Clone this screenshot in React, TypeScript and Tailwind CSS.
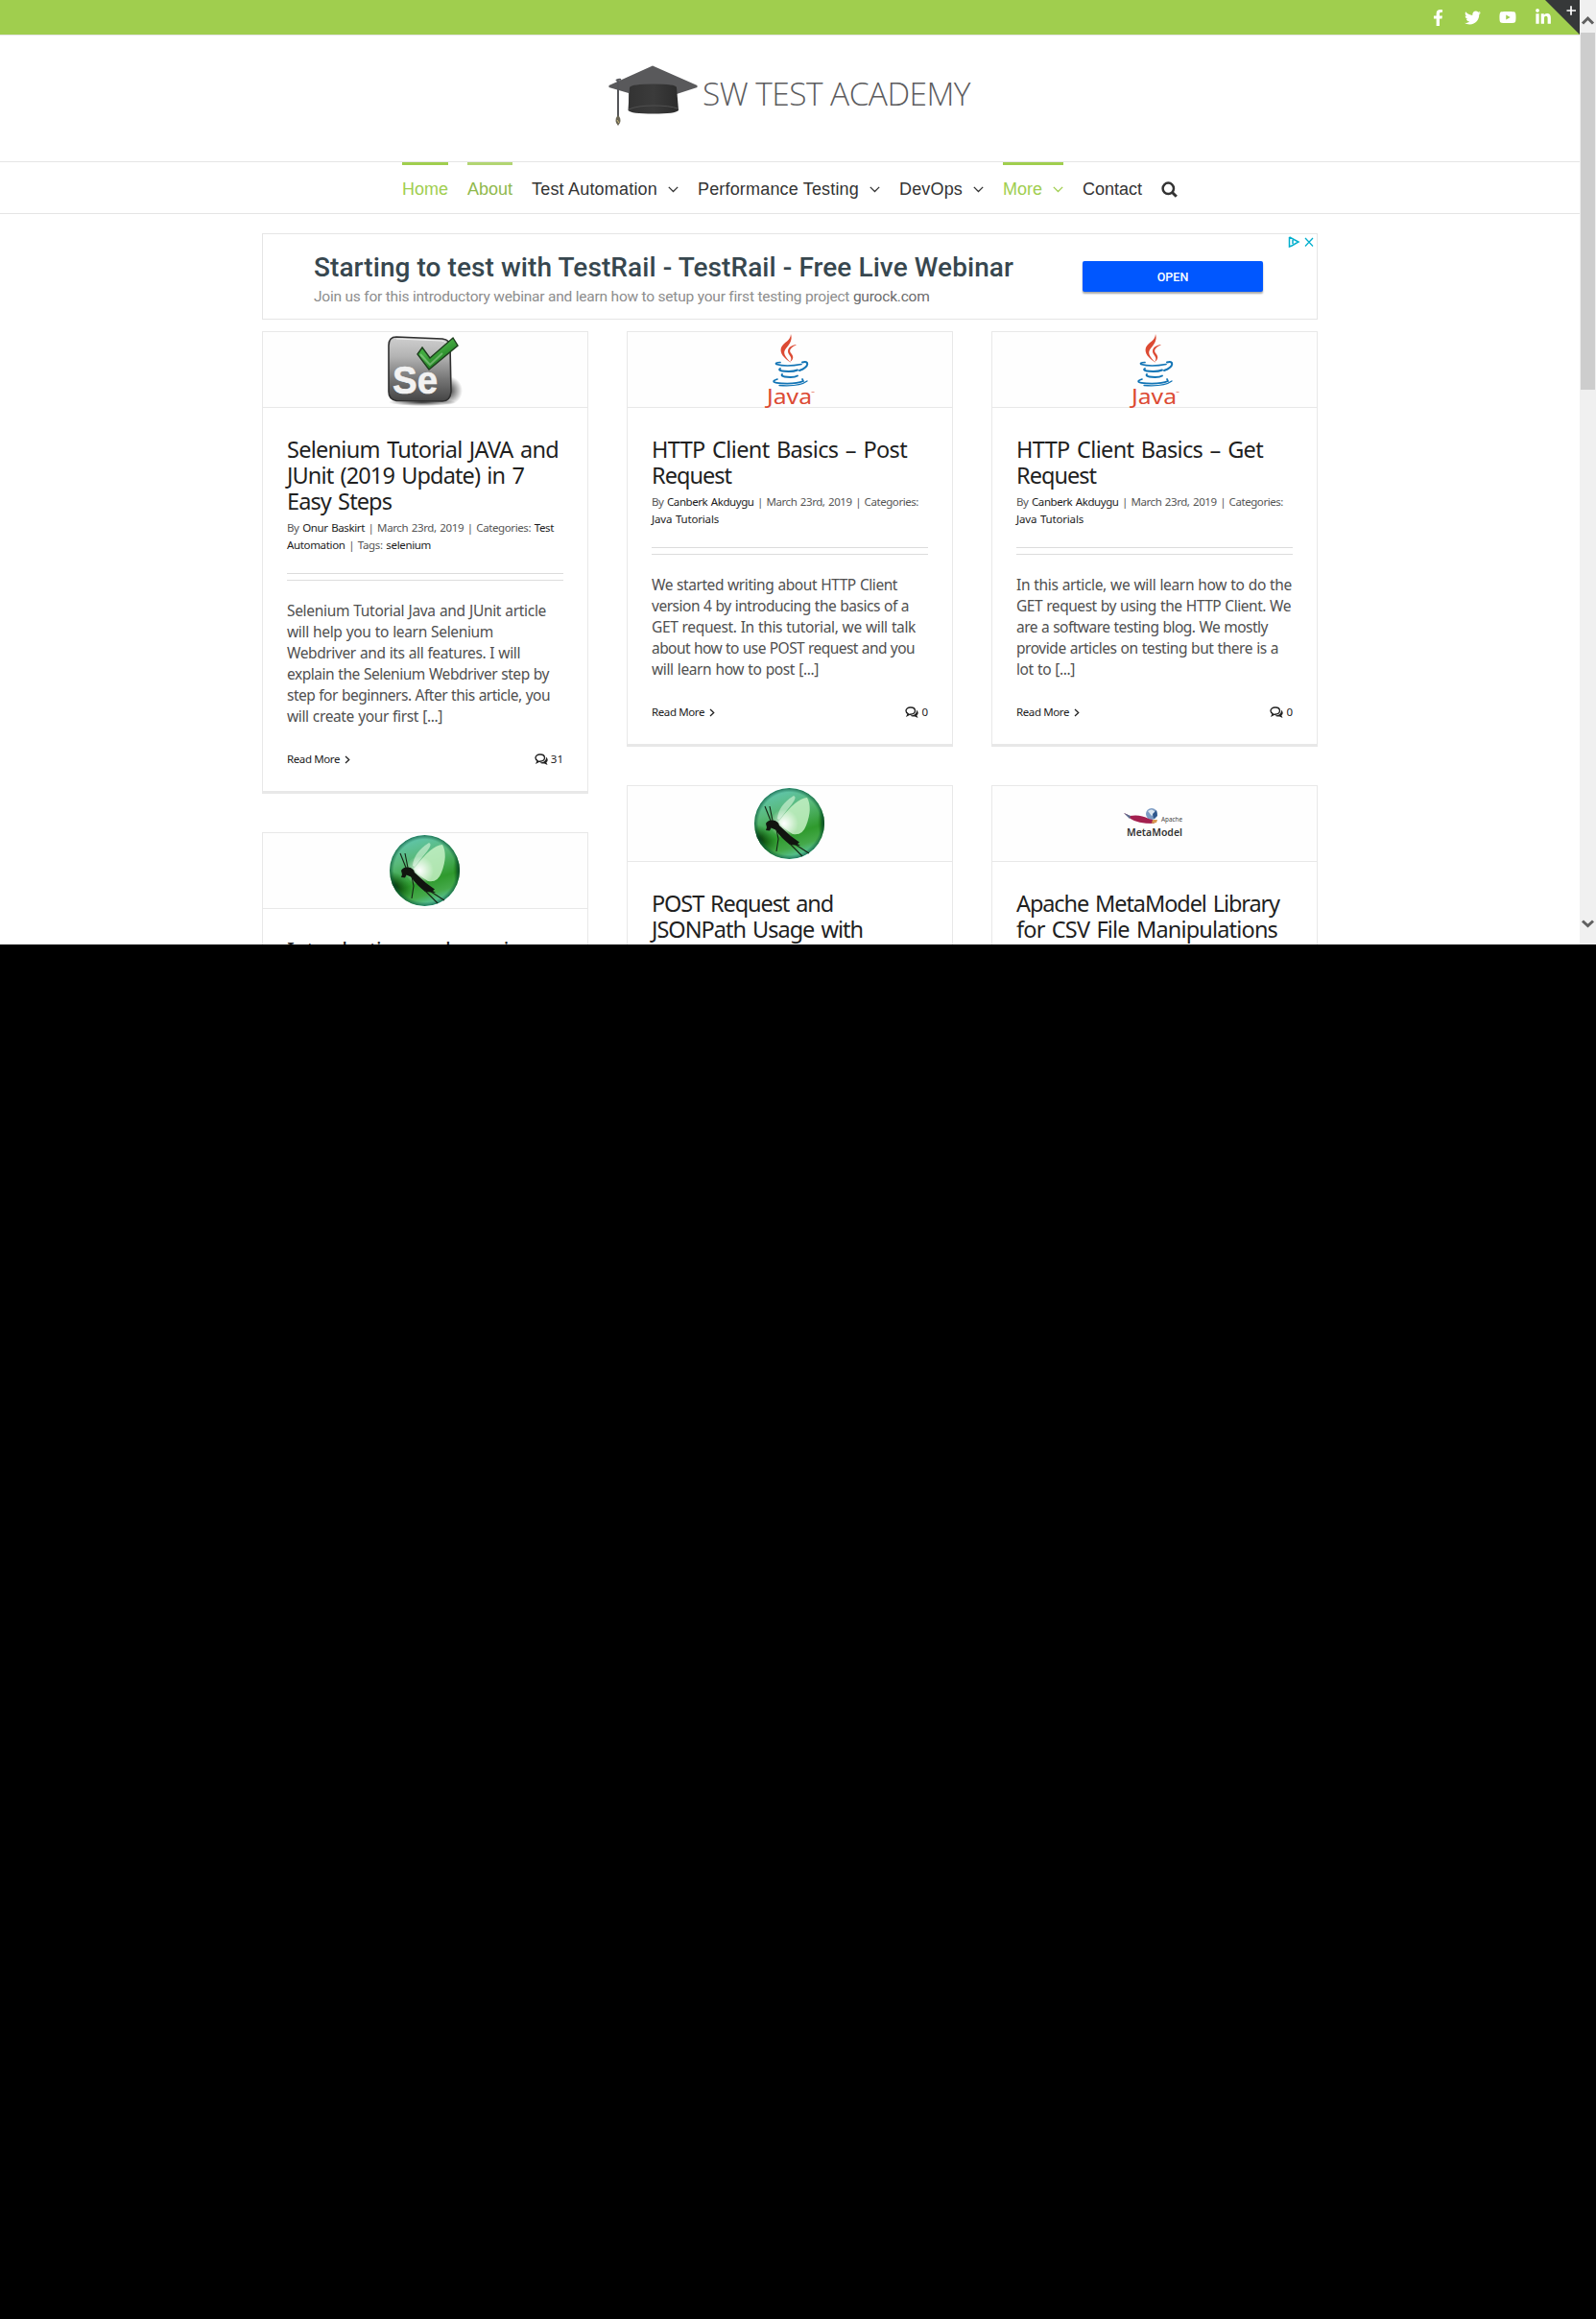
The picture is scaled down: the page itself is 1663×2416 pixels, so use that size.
import { useLayoutEffect, useRef, type ReactNode } from "react";
import { FaFacebookF, FaTwitter, FaYoutube, FaLinkedinIn } from "react-icons/fa";

/* Single line of text whose tracking is adjusted so that it spans `w` pixels. */
function Line({ w, children, className = "" }: { w: number; children: ReactNode; className?: string }) {
  const ref = useRef<HTMLSpanElement>(null);
  useLayoutEffect(() => {
    const el = ref.current;
    if (!el) return;
    el.style.letterSpacing = "0px";
    const count = (el.textContent || "").length;
    const natural = el.getBoundingClientRect().width;
    el.style.letterSpacing = `${(w - natural) / count}px`;
  }, [w]);
  return (
    <span className={`block ${className}`}>
      <span ref={ref} className="inline-block whitespace-pre align-top">
        {children}
      </span>
    </span>
  );
}

function CapLogo() {
  return (
    <svg width="94" height="66" viewBox="0 0 94 66" className="shrink-0">
      <defs>
        <linearGradient id="capBase" x1="0" x2="1">
          <stop offset="0" stopColor="#333" />
          <stop offset="0.5" stopColor="#3b3b3b" />
          <stop offset="1" stopColor="#2c2c2c" />
        </linearGradient>
      </defs>
      <path d="M46 1.5 L92.500 22 V24 L71 31 V40 H21 V30 L0.500 24 V22 Z" fill="#59595b" />
      <path d="M22 24 Q24 20.500 47 20.500 Q70 20.500 71 24 L73 48 Q70 51.500 47 51.500 Q23 51.500 20.500 48 Z" fill="url(#capBase)" />
      <path d="M21 47 Q30 43 47 43 Q64 43 72 46" stroke="#505050" fill="none" />
      <path d="M8 17 Q10 15 13 16 M10 17 V55" stroke="#55565a" strokeWidth="2" fill="none" />
      <path d="M10 53 Q6.500 56 8 61 L10 64 L12 61 Q13.500 56 10 53Z" fill="#6b6655" />
      <path d="M9 58 L11 61" stroke="#c9b97a" />
    </svg>
  );
}

function NavChevron() {
  return (
    <svg width="11" height="7" viewBox="0 0 11 7" fill="none" stroke="currentColor" strokeWidth="1.300" className="mt-[1px] ml-[11px]">
      <path d="M0.800 0.900 L5.500 5.500 L10.200 0.900" />
    </svg>
  );
}

function NavItem({ label, w, bar = "border-transparent", color = "text-[#333]", chevron = false }: { label: string; w: number; bar?: string; color?: string; chevron?: boolean }) {
  return (
    <a className={`flex h-[53px] items-center border-t-[3px] ${bar} ${color}`}>
      <Line w={w}>{label}</Line>
      {chevron && <NavChevron />}
    </a>
  );
}

function SeleniumLogo() {
  return (
    <svg width="80" height="74" viewBox="0 0 80 74" className="mr-[3px] overflow-visible">
      <defs>
        <linearGradient id="seBox" x1="0" y1="0" x2="0" y2="1">
          <stop offset="0" stopColor="#cfcfcf" />
          <stop offset="0.300" stopColor="#b4b4b4" />
          <stop offset="0.650" stopColor="#777" />
          <stop offset="1" stopColor="#444" />
        </linearGradient>
        <linearGradient id="seTick" x1="0" y1="0" x2="0.700" y2="1">
          <stop offset="0" stopColor="#2bb02e" />
          <stop offset="0.450" stopColor="#45aa42" />
          <stop offset="1" stopColor="#0c6a12" />
        </linearGradient>
        <radialGradient id="seShade">
          <stop offset="0" stopColor="#000" stopOpacity="0.800" />
          <stop offset="1" stopColor="#000" stopOpacity="0" />
        </radialGradient>
      </defs>
      <ellipse cx="65" cy="59" rx="15" ry="15" fill="url(#seShade)" />
      <ellipse cx="38" cy="71" rx="35" ry="4" fill="url(#seShade)" />
      <path d="M11 3 L59 5 Q67 6 67 13 L68 60 Q67 70 59 70 L11 69.500 Q3 68 3 60 V12 Q3 3 11 3Z" fill="url(#seBox)" stroke="#303030" strokeWidth="1.600" />
      <path d="M11 5 L58 7 Q64 8 65 14" fill="none" stroke="#eee" strokeWidth="1" />
      <text x="7" y="62" fontFamily="Liberation Sans" fontWeight="700" fontSize="41" textLength="47" lengthAdjust="spacingAndGlyphs" fill="#f2f2f2" stroke="#f2f2f2" strokeWidth="0.600">Se</text>
      <path d="M33 21 L38 14 L46 25 L70 4 L75 12 L45 37 Z" fill="url(#seTick)" stroke="#1d3d1d" strokeWidth="1.400" />
      <path d="M36 21 L46 32 L59 20" stroke="#a5d8a0" strokeOpacity="0.500" strokeWidth="2" fill="none" />
    </svg>
  );
}

function JavaLogo() {
  return (
    <svg width="54" height="76" viewBox="0 0 54 76" className="mb-[2px] ml-[5px] overflow-visible">
      <g fill="#dc4a33">
        <path d="M25 2 C27 8 24 12 20 17 C16 22 19 25 25 32 C18 27 13 22 15 16 C18 10 25 9 25 2Z" />
        <path d="M31 13 C25 16 22 19 26 23 C29 27 26 30 24 31 C28 26 22 24 22 20 C22 15 28 13 31 13Z" />
      </g>
      <g fill="none" stroke="#1274b5" strokeLinecap="round">
        <path d="M14 31.500 Q8 32 10 33.500 Q20 36.500 36 33.500" strokeWidth="1.700" />
        <path d="M37 31.500 C44 29 45 36 34 40" strokeWidth="2" />
        <path d="M14 38 C9 41 26 42 32 39.500" strokeWidth="1.900" />
        <path d="M16 44 C13 47 28 48 32 45.500" strokeWidth="1.900" />
        <path d="M11 49 C-4 54 29 55 38 51 L37 49" strokeWidth="1.700" />
        <path d="M13 55.500 Q34 57 42 51" strokeWidth="1.300" />
      </g>
      <text x="0" y="75" fontFamily="Noto Sans" fontSize="22.500" textLength="47" lengthAdjust="spacingAndGlyphs" fill="#dc4a33">Java</text>
      <path d="M46.500 62.500 H49.500" stroke="#dc4a33" strokeOpacity="0.600" />
    </svg>
  );
}

function LocustLogo() {
  return (
    <svg width="74" height="76" viewBox="0 0 74 76">
      <defs>
        <linearGradient id="orb" x1="0.200" y1="0" x2="0.500" y2="1">
          <stop offset="0" stopColor="#62c9bb" />
          <stop offset="0.350" stopColor="#59b97a" />
          <stop offset="0.680" stopColor="#2f9a2d" />
          <stop offset="0.850" stopColor="#45a94a" />
          <stop offset="1" stopColor="#5cc9a9" />
        </linearGradient>
        <radialGradient id="orbEdge">
          <stop offset="0.880" stopColor="#0b5a3c" stopOpacity="0" />
          <stop offset="1" stopColor="#0b5a3c" stopOpacity="0.750" />
        </radialGradient>
        <radialGradient id="orbDark">
          <stop offset="0" stopColor="#022804" />
          <stop offset="1" stopColor="#065c08" stopOpacity="0" />
        </radialGradient>
        <radialGradient id="orbGlow">
          <stop offset="0" stopColor="#fff" />
          <stop offset="1" stopColor="#fff" stopOpacity="0" />
        </radialGradient>
        <clipPath id="orbClip"><ellipse cx="36.500" cy="38" rx="36.500" ry="37" /></clipPath>
      </defs>
      <g clipPath="url(#orbClip)">
        <rect width="74" height="76" fill="url(#orb)" />
        <ellipse cx="4" cy="54" rx="22" ry="14" fill="url(#orbDark)" transform="rotate(30 4 54)" />
        <ellipse cx="74" cy="36" rx="8" ry="22" fill="url(#orbDark)" />
        <path d="M24 33 Q25 19 41 9 Q45 10 39 18 L26 34Z" fill="#c9f0cf" fillOpacity="0.700" />
        <path d="M27 34 Q43 12 55 11 Q61 22 54 40 Q50 51 40 49 Q30 43 25 36Z" fill="#c6f1c4" fillOpacity="0.850" />
        <circle cx="31" cy="38" r="15" fill="url(#orbGlow)" />
        <ellipse cx="36.500" cy="38" rx="36.500" ry="37" fill="url(#orbEdge)" />
      </g>
      <path d="M12 38 Q14 34 19 34.500 Q25 35 26 40 L38 51 L47 57.500 L45 59 L48 61 L37 60 Q28 53 22 44.500 L17.500 42.500 L16 45.500 L12 45 L13 42Z" fill="#11150f" />
      <path d="M17 35 L11 20 M19 35 L16 20 M23 44 L25 54 L23 67 M37 59 L50 72 M43 60 L57 69" stroke="#142414" strokeWidth="1.100" fill="none" />
    </svg>
  );
}

function MetaModelLogo() {
  return (
    <svg width="66" height="34" viewBox="0 0 66 34" className="mr-[1px] mb-[2px] overflow-visible">
      <circle cx="30" cy="8" r="6" fill="#7d9cc4" />
      <path d="M26 5 Q31 1 34 7 L30 10Z" fill="#dbe6f0" />
      <path d="M31 8 L35 4 L36 10 L32 13Z" fill="#2e568c" />
      <path d="M1 7 Q4 8 7 10 Q18 8 27 13 L35 15 L32 18 Q15 18 8 13Z" fill="#a3204f" />
      <path d="M1 7 L8 10 L7 13Z" fill="#5c6c8e" />
      <path d="M31 14 L36 14 L35 17 L30 18Z" fill="#d99a52" />
      <text x="40" y="16" fontFamily="Noto Sans" fontSize="7.500" textLength="22" lengthAdjust="spacingAndGlyphs" fill="#444">Apache</text>
      <text x="4" y="31" fontFamily="Noto Sans" fontWeight="600" fontSize="11.500" textLength="58" lengthAdjust="spacingAndGlyphs" fill="#333">MetaModel</text>
    </svg>
  );
}

function CommentsIcon() {
  return (
    <svg width="14" height="13" viewBox="0 0 14 13" className="mr-[3px]">
      <path d="M5.800 1 C3 1 1 2.600 1 4.600 C1 6 2 7 3.200 7.600 L2.400 9.500 L5 8.200 C8.500 8.500 10.500 6.700 10.500 4.600 C10.500 2.600 8.600 1 5.800 1Z" fill="none" stroke="#222" strokeWidth="1.400" />
      <path d="M12 3.800 C14.400 5.600 14 8 12.300 9.300 L13.500 12 L10.200 10.400 C8.200 10.700 6.500 10.300 5.500 9.500 C9.500 9.600 12.300 7.400 12 3.800Z" fill="#222" />
    </svg>
  );
}

type Run = [string, boolean?];
type Post = {
  logo: ReactNode;
  title: [string, number][];
  meta?: [Run[], number][];
  body?: [string, number][];
  comments?: string;
};

const javaMeta: [Run[], number][] = [
  [[["By "], ["Canberk Akduygu", true], [" | March 23rd, 2019 | Categories:"]], 278],
  [[["Java Tutorials", true]], 70],
];

const columns: Post[][] = [
  [
    {
      logo: <SeleniumLogo />,
      title: [["Selenium Tutorial JAVA and", 283], ["JUnit (2019 Update) in 7", 247], ["Easy Steps", 109]],
      meta: [
        [[["By "], ["Onur Baskirt", true], [" | March 23rd, 2019 | Categories: "], ["Test", true]], 278],
        [[["Automation", true], [" | Tags: "], ["selenium", true]], 150],
      ],
      body: [
        ["Selenium Tutorial Java and JUnit article", 270],
        ["will help you to learn Selenium", 215],
        ["Webdriver and its all features. I will", 243],
        ["explain the Selenium Webdriver step by", 273],
        ["step for beginners. After this article, you", 274],
        ["will create your first [...]", 162],
      ],
      comments: "31",
    },
    { logo: <LocustLogo />, title: [["Introduction and running", 257]] },
  ],
  [
    {
      logo: <JavaLogo />,
      title: [["HTTP Client Basics – Post", 266], ["Request", 83]],
      meta: javaMeta,
      body: [
        ["We started writing about HTTP Client", 256],
        ["version 4 by introducing the basics of a", 268],
        ["GET request. In this tutorial, we will talk", 275],
        ["about how to use POST request and you", 274],
        ["will learn how to post [...]", 174],
      ],
      comments: "0",
    },
    { logo: <LocustLogo />, title: [["POST Request and", 189], ["JSONPath Usage with", 220]] },
  ],
  [
    {
      logo: <JavaLogo />,
      title: [["HTTP Client Basics – Get", 257], ["Request", 83]],
      meta: javaMeta,
      body: [
        ["In this article, we will learn how to do the", 287],
        ["GET request by using the HTTP Client. We", 286],
        ["are a software testing blog. We mostly", 262],
        ["provide articles on testing but there is a", 273],
        ["lot to [...]", 61],
      ],
      comments: "0",
    },
    { logo: <MetaModelLogo />, title: [["Apache MetaModel Library", 274], ["for CSV File Manipulations", 272]] },
  ],
];

function Card({ post }: { post: Post }) {
  return (
    <article className="border border-b-[3px] border-[#e8e8e8] bg-white">
      <div className="flex h-[79px] items-center justify-center border-b border-[#e8e8e8] bg-[#fefefe]">{post.logo}</div>
      <div className="px-[25px] pt-[30px] pb-[21px]">
        <h2 className="text-[23.5px] leading-[27px] text-[#1f1f1f] [word-spacing:2px]">
          {post.title.map(([t, w]) => <Line key={t} w={w}>{t}</Line>)}
        </h2>
        {post.meta && (
          <p className="mt-[5px] text-[11.5px] leading-[18px] text-[#555] [word-spacing:1px]">
            {post.meta.map(([runs, w], i) => (
              <Line key={i} w={w}>
                {runs.map(([t, strong], j) => <span key={j} className={strong ? "text-[#1c1c1c]" : ""}>{t}</span>)}
              </Line>
            ))}
          </p>
        )}
        {post.body && (
          <>
            <div className="mt-[20px] h-[8px] border-y border-[#dcdcdc]" />
            <p className="mt-[20px] text-[15.5px] leading-[22px] text-[#505050] [word-spacing:0.5px]">
              {post.body.map(([t, w]) => <Line key={t} w={w}>{t}</Line>)}
            </p>
            <div className="mt-[22px] flex h-[24px] items-center justify-between text-[11.5px] text-[#222]">
              <span className="flex items-center">
                <Line w={55}>Read More</Line>
                <svg width="6" height="9" viewBox="0 0 6 9" fill="none" stroke="#222" strokeWidth="1.300" className="mt-[1px] ml-[5px]">
                  <path d="M1 1 L4.700 4.500 L1 8" />
                </svg>
              </span>
              <span className="flex items-center"><CommentsIcon />{post.comments}</span>
            </div>
          </>
        )}
      </div>
    </article>
  );
}

function Scrollbar() {
  return (
    <div className="flex h-[984px] w-[17px] shrink-0 flex-col items-center bg-[#f0f0f0]">
      <svg width="17" height="34" viewBox="0 0 17 34" className="shrink-0" fill="none" stroke="#606060" strokeWidth="3">
        <path d="M3 24.500 L8.500 19 L14 24.500" />
      </svg>
      <div className="h-[372px] w-[15px] bg-[#cdcdcd]" />
      <svg width="17" height="34" viewBox="0 0 17 34" className="mt-auto shrink-0" fill="none" stroke="#606060" strokeWidth="3">
        <path d="M3 9.500 L8.500 14.500 L14 9.500" />
      </svg>
    </div>
  );
}

export default function App() {
  return (
    <div className="h-[2416px] w-[1663px] overflow-hidden bg-black">
      <div className="flex h-[984px] overflow-hidden bg-white">
        <div className="h-[984px] w-[1646px] overflow-hidden">
          <div className="relative flex h-[37px] items-center justify-end border-b border-[#e5e5e5] bg-[#a0ce4e] pr-[29px] text-white">
            <div className="flex items-center gap-[19px]">
              <FaFacebookF size={17} />
              <FaTwitter size={17} />
              <FaYoutube size={18} />
              <FaLinkedinIn size={18} className="mb-[1px]" />
            </div>
            <svg width="36" height="36" viewBox="0 0 36 36" className="absolute top-0 right-0">
              <path d="M0 0 H36 V36Z" fill="#363839" />
              <path d="M22.500 11 H32 M27 6.300 V15.700" stroke="#fff" strokeWidth="1.700" />
            </svg>
          </div>

          <header className="flex h-[131px] justify-center">
            <div className="flex w-[378px] pt-[30px]">
              <CapLogo />
              <Line w={279} className="pt-[6px] pl-[4px] font-['Open_Sans'] text-[33.5px] leading-[48px] font-light text-[#5c5c5e]">SW TEST ACADEMY</Line>
            </div>
          </header>

          <nav className="flex h-[55px] justify-center gap-[20px] border-y border-[#e5e5e5] font-['Liberation_Sans'] text-[18px]">
            <NavItem label="Home" w={48} bar="border-[#a0ce4e]" color="text-[#a0ce4e]" />
            <NavItem label="About" w={47} bar="border-[#b2d572]" color="text-[#8fb84c]" />
            <NavItem label="Test Automation" w={131} chevron />
            <NavItem label="Performance Testing" w={168} chevron />
            <NavItem label="DevOps" w={66} chevron />
            <NavItem label="More" w={41} bar="border-[#a0ce4e]" color="text-[#a0ce4e]" chevron />
            <NavItem label="Contact" w={62} />
            <svg width="17" height="17" viewBox="0 0 17 17" fill="none" stroke="#333" className="mt-[20px]">
              <circle cx="7.300" cy="7.300" r="5.700" strokeWidth="2.500" />
              <path d="M11.500 11.500 L15.800 15.800" strokeWidth="3" />
            </svg>
          </nav>

          <main className="mx-auto mt-[20px] w-[1100px]">
            <section className="relative flex h-[90px] justify-between border border-[#e5e5e5] pr-[56px] pl-[53px] font-['Roboto']">
              <div className="pt-[18px]">
                <Line w={729} className="text-[28px] leading-[34px] font-medium text-[#37474f]">Starting to test with TestRail - TestRail - Free Live Webinar</Line>
                <Line w={641} className="mt-[2px] text-[15.5px] leading-[22px] text-[#8d8d8d]">
                  Join us for this introductory webinar and learn how to setup your first testing project <span className="text-[#6b6b6b]">gurock.com</span>
                </Line>
              </div>
              <button className="mt-[28px] h-[32px] w-[188px] rounded-[2px] bg-[#0057ff] pt-[2px] text-[12.5px] font-medium text-white shadow-[0_2px_2px_rgba(0,0,0,0.35)]">OPEN</button>
              <svg width="28" height="12" viewBox="0 0 28 12" fill="none" stroke="#00aecd" strokeWidth="1.500" className="absolute top-[2px] right-[2px]">
                <path d="M1.500 1 L11 6 L4 10 M1.500 1 V11 L4 10 M5 4 V8" />
                <path d="M18 2 L26 10.500 M26 2 L18 10.500" strokeWidth="1.300" />
              </svg>
            </section>

            <section className="mt-[12px] grid grid-cols-3 gap-[40px] font-['Noto_Sans']">
              {columns.map((posts, i) => (
                <div key={i} className="flex flex-col gap-[40px]">
                  {posts.map((p, j) => <Card key={j} post={p} />)}
                </div>
              ))}
            </section>
          </main>
        </div>
        <Scrollbar />
      </div>
    </div>
  );
}
